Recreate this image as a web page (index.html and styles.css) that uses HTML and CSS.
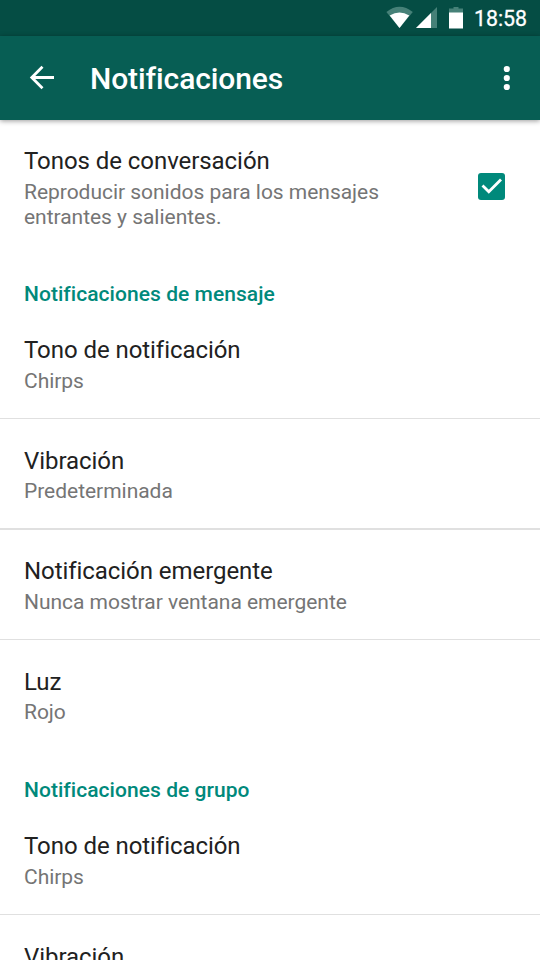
FILE: index.html
```html
<!DOCTYPE html>
<html lang="es">
<head>
<meta charset="utf-8">
<title>Notificaciones</title>
<link rel="stylesheet" href="styles.css">
</head>
<body>
<div class="statusbar">
<svg class="signals" width="80" height="36" viewBox="0 0 80 36"><path d="M.4 12Q13.5 1.500 26.800 12L13.500 28Z" fill="#468178"/><path d="M3.700 15.500Q13.500 9.500 23.300 15.500L13.500 28Z" fill="#fff"/><path d="M51 7V28H30Z" fill="#468178"/><path d="M45 13V28H30Z" fill="#fff"/><path d="M63 8.500H67.500V7H72.500V8.500H77V13H63Z" fill="#468178"/><path d="M63 12.500H77V28.500H63Z" fill="#fff"/></svg>
<span class="clock">18:58</span>
</div>
<header class="toolbar">
<svg class="back" width="26" height="26" viewBox="0 0 26 26"><path d="M25 12.500H3M13.500 1.800L2.800 12.500L13.500 23.200" fill="none" stroke="#fff" stroke-width="2.800"/></svg>
<h1>Notificaciones</h1>
<svg class="more" width="8" height="26" viewBox="0 0 8 26" fill="#fff"><circle cx="3.800" cy="4" r="3.100"/><circle cx="3.800" cy="13" r="3.100"/><circle cx="3.800" cy="22" r="3.100"/></svg>
</header>
<main>
<section class="row first">
<div><h2>Tonos de conversación</h2><p>Reproducir sonidos para los mensajes<br>entrantes y salientes.</p></div>
<svg class="check" width="27" height="27" viewBox="0 0 27 27"><rect width="27" height="27" rx="3" fill="#00897b"/><path d="M4.500 12.500L10.800 18.800L23 6.500" fill="none" stroke="#fff" stroke-width="2.800"/></svg>
</section>
<h3>Notificaciones de mensaje</h3>
<section class="row after"><div><h2>Tono de notificación</h2><p>Chirps</p></div></section>
<section class="row thick"><div><h2>Vibración</h2><p>Predeterminada</p></div></section>
<section class="row"><div><h2>Notificación emergente</h2><p>Nunca mostrar ventana emergente</p></div></section>
<section class="row last"><div><h2>Luz</h2><p>Rojo</p></div></section>
<h3>Notificaciones de grupo</h3>
<section class="row after"><div><h2>Tono de notificación</h2><p>Chirps</p></div></section>
<section class="row"><div><h2>Vibración</h2><p>Predeterminada</p></div></section>
</main>
</body>
</html>
```
FILE: styles.css
```css
* { box-sizing: border-box; }
body { margin: 0; height: 960px; overflow: hidden; background: #fff; font-family: Roboto, sans-serif; }
h1, h2, h3, p { margin: 0; }
.statusbar { height: 36px; background: #054d44; display: flex; justify-content: flex-end; color: #fff; }
.clock { width: 66px; margin-left: 8px; font-size: 21.3px; line-height: 38px; font-weight: 400; -webkit-text-stroke: .3px #fff; }
.toolbar { height: 84px; background: #075e54; display: flex; align-items: center; color: #fff; padding: 0 29px; box-shadow: 0 1px 5px rgba(0,0,0,.4); }
.toolbar h1 { font-size: 30px; font-weight: 500; line-height: 36px; margin: 2px 0 0 35px; letter-spacing: -.1px; }
.more { margin-left: auto; }
main { height: 840px; overflow: hidden; }
.row { height: 110.5px; padding: 27px 24px 0; border-bottom: 1px solid #e0e0e0; }
.row h2 { font-size: 24px; font-weight: 400; line-height: 30px; color: #212121; letter-spacing: -.06px; }
.row p { font-size: 21px; line-height: 25px; color: #757575; margin-top: 3px; letter-spacing: -.03px; }
.row.first { height: 152px; border: 0; display: flex; justify-content: space-between; padding: 26px 35px 0 24px; }
.first p { line-height: 24.500px; margin-top: 4px; }
.check { margin-top: 27px; }
h3 { height: 44px; padding-left: 24px; font-size: 21px; line-height: 44px; font-weight: 500; color: #00897b; letter-spacing: .05px; }
.row.after { height: 103px; padding-top: 19px; }
.row.after p { margin-top: 4px; }
.row.thick { height: 111px; border-bottom-width: 2px; }
.row.thick + .row { height: 110px; padding-top: 26px; }
.row.thick + .row p { margin-top: 4px; }
.row.last { border: 0; height: 128px; }
```
